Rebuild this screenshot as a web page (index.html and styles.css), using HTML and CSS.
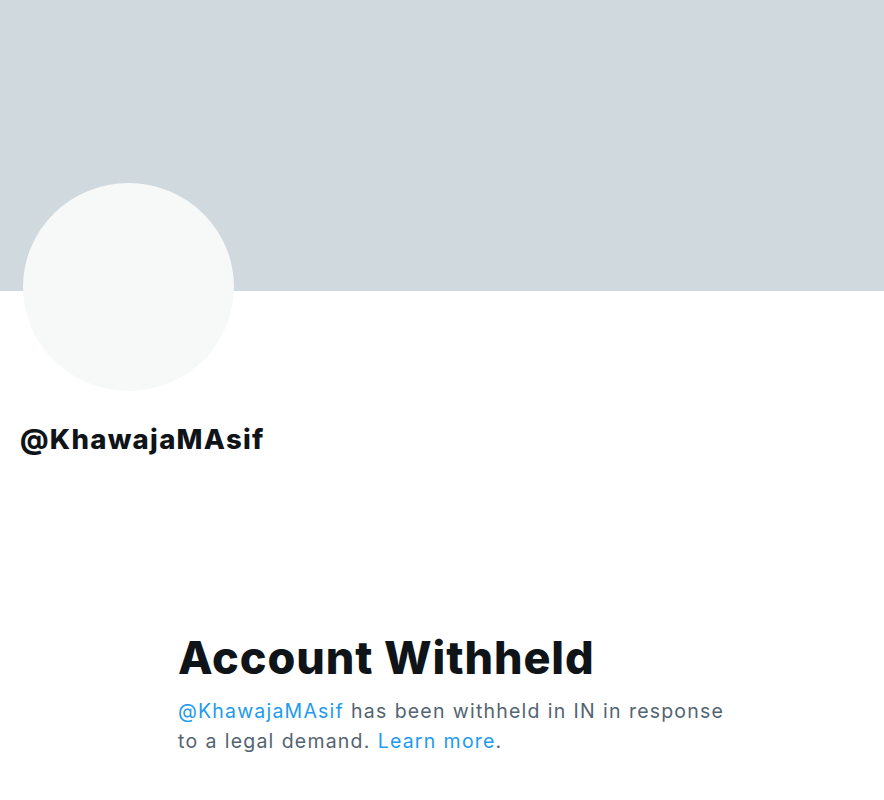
FILE: index.html
```html
<!DOCTYPE html>
<html>
<head>
<meta charset="utf-8">
<link rel="stylesheet" href="styles.css">
</head>
<body>
<div class="page">
  <div class="banner"></div>
  <div class="profile">
    <div class="avatar"></div>
    <div class="handle">@KhawajaMAsif</div>
  </div>
  <div class="withheld">
    <h1 class="title">Account Withheld</h1>
    <p class="desc"><span class="link">@KhawajaMAsif</span> has been withheld in IN in response to a legal demand. <span class="link">Learn more</span>.</p>
  </div>
</div>
</body>
</html>
```
FILE: styles.css
```css
html, body {
  margin: 0;
  padding: 0;
  background: #ffffff;
}
.page {
  width: 884px;
  height: 800px;
  overflow: hidden;
  font-family: Inter, "Liberation Sans", sans-serif;
}
.banner {
  height: 291px;
  background: #cfd9de;
}
.profile {
  padding-left: 20px;
}
.avatar {
  width: 211px;
  height: 208px;
  border-radius: 50%;
  background: #f7f9f9;
  margin-top: -108px;
  margin-left: 3px;
}
.handle {
  margin-top: 30px;
  font-size: 27.5px;
  font-weight: 800;
  color: #0f1419;
  letter-spacing: 1.3px;
  line-height: 36px;
}
.withheld {
  margin-top: 175px;
  margin-left: 178px;
  width: 560px;
}
.title {
  margin: 0;
  font-size: 45px;
  font-weight: 800;
  color: #0f1419;
  line-height: 52px;
  letter-spacing: 0.9px;
}
.desc {
  margin: 12px 0 0;
  font-size: 19.5px;
  line-height: 30px;
  color: #536471;
  letter-spacing: 1.2px;
  word-spacing: 0.5px;
}
.link {
  color: #1d9bf0;
}
```
